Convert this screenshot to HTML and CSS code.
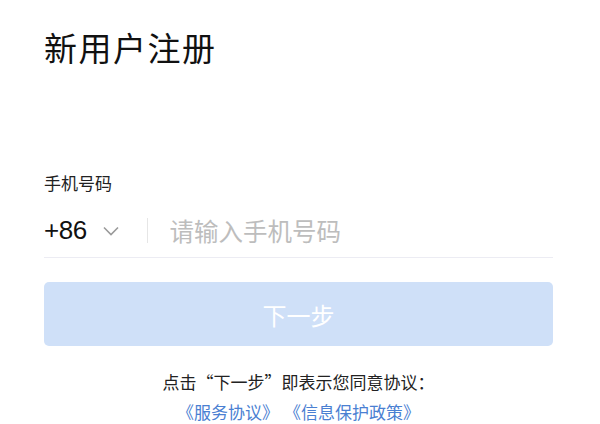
FILE: index.html
```html
<!DOCTYPE html>
<html lang="zh-CN">
<head>
    <meta charset="UTF-8">
    <meta name="viewport" content="width=device-width, initial-scale=1.0">
    <title>新用户注册</title>
    <link rel="stylesheet" href="styles.css">
</head>
<body>
    <section class="register">
        <h1 class="title">新用户注册</h1>
        <label class="label" for="phoneInput">手机号码</label>
        <div class="phone-row">
            <div class="area">
                <span class="code">+86</span>
                <svg class="chevron" width="16" height="10" viewBox="0 0 16 10">
                    <polyline points="1,1.5 8,8.5 15,1.5" fill="none" stroke="#9a9a9a" stroke-width="1.6"/>
                </svg>
            </div>
            <span class="sep"></span>
            <input type="tel" id="phoneInput" class="phone" placeholder="请输入手机号码">
        </div>
        <button class="next" type="button">下一步</button>
        <div class="agree">
            <p>点击“下一步”即表示您同意协议：</p>
            <p class="links"><a href="#">《服务协议》</a><a href="#">《信息保护政策》</a></p>
        </div>
    </section>
</body>
</html>
```

FILE: styles.css
```css
* { margin: 0; padding: 0; box-sizing: border-box; }
body { font-family: "Noto Sans CJK SC", sans-serif; background: #fff; color: #1a1a1a; width: 600px; height: 424px; overflow: hidden; }
.register { padding: 30px 47px 0 44px; display: flex; flex-direction: column; }
.title { font-size: 33px; line-height: 34px; font-weight: 400; letter-spacing: 1.5px; color: #111; }
.label { margin-top: 109px; font-size: 17px; line-height: 20px; color: #222; }
.phone-row { margin-top: 11px; height: 54px; display: flex; align-items: center; border-bottom: 1px solid #ececf3; }
.area { display: flex; align-items: center; }
.code { font-family: "Liberation Sans", sans-serif; font-size: 26px; color: #111; letter-spacing: -0.5px; }
.chevron { margin-left: 16px; }
.sep { width: 1px; height: 25px; background: #e6e6e6; margin: 0 22px 0 28px; }
.phone { flex: 1; border: none; outline: none; font-family: "Noto Sans CJK SC", sans-serif; font-size: 24.5px; color: #111; background: transparent; }
.phone::placeholder { color: #bdbdbd; }
.next { margin-top: 24px; height: 64px; border: none; border-radius: 5px; background: #cfe0f8; color: #fff; font-family: "Noto Sans CJK SC", sans-serif; font-size: 24px; }
.agree { margin-top: 21px; text-align: center; font-size: 17px; line-height: 30px; color: #222; }
.links { display: flex; justify-content: center; gap: 5px; }
.links a { color: #4a80d2; text-decoration: none; }
```
